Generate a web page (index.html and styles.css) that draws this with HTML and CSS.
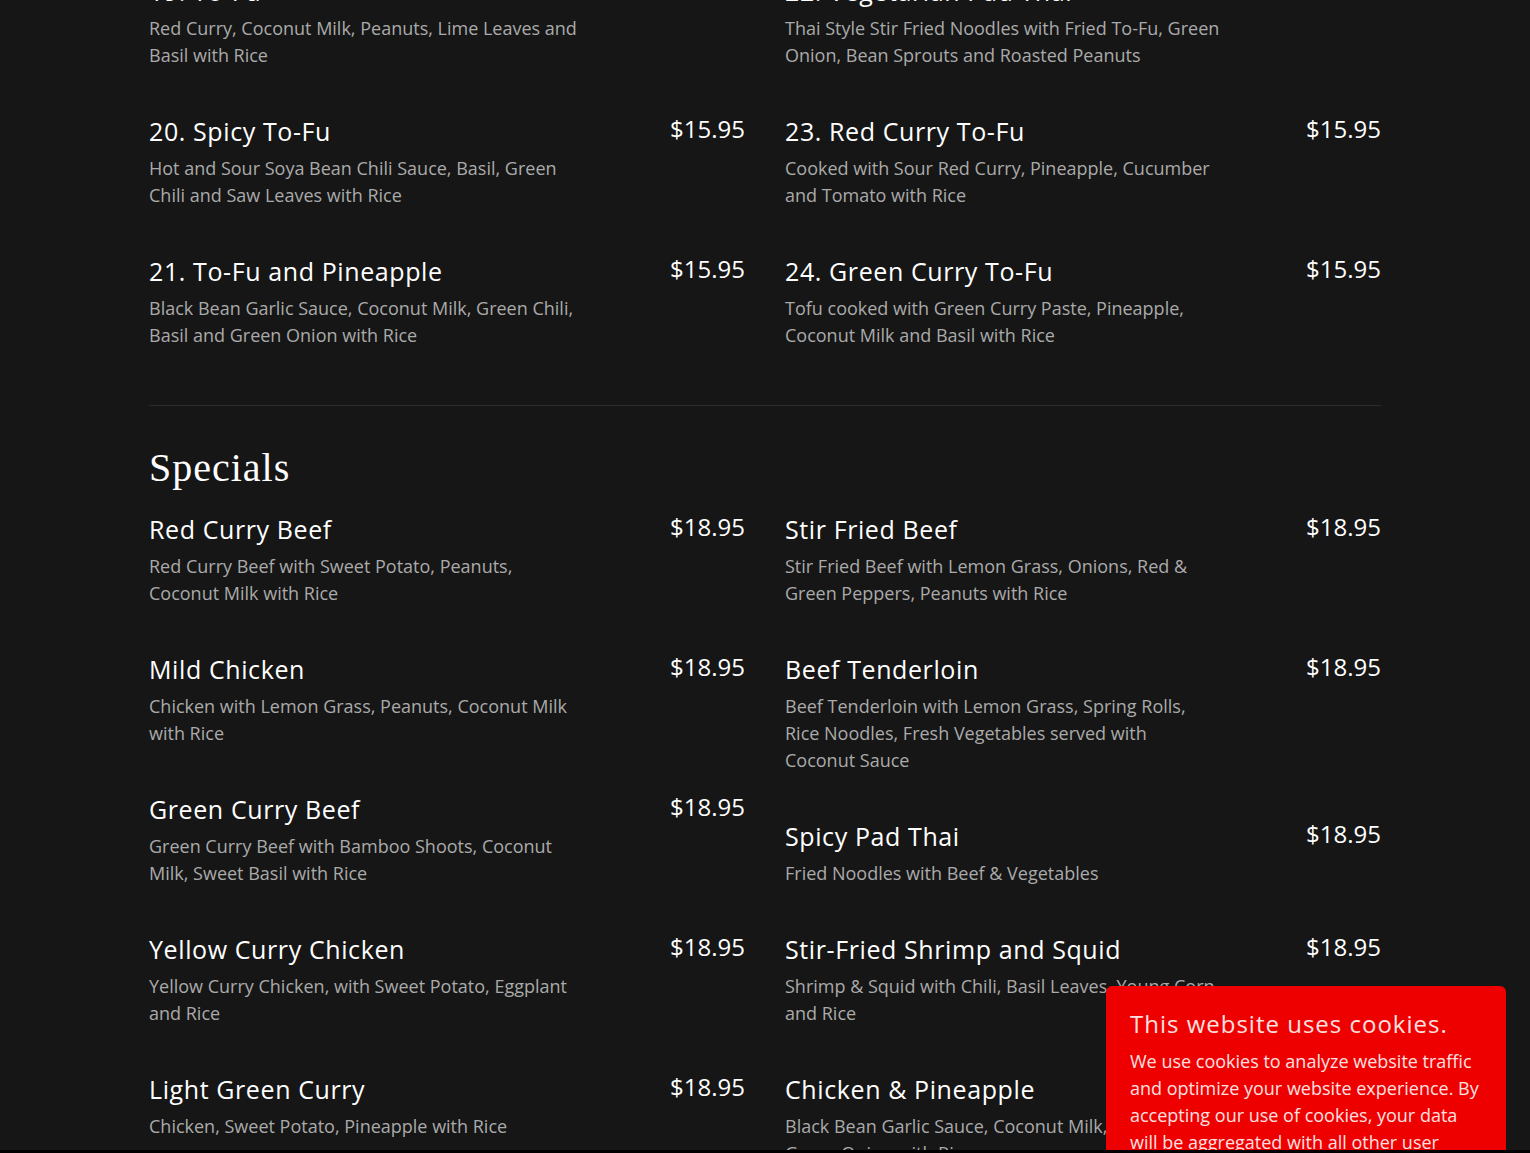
FILE: index.html
```html
<!DOCTYPE html>
<html lang="en">
<head>
<meta charset="utf-8">
<title>Menu</title>
<link rel="stylesheet" href="styles.css">
</head>
<body>
<main class="menu">
  <section class="section">
    <div class="columns">
      <div class="col">
        <div class="item"><div class="row"><h3 class="name">19. To-Fu</h3><span class="price">$15.95</span></div><p class="desc">Red Curry, Coconut Milk, Peanuts, Lime Leaves and Basil with Rice</p></div>
        <div class="item"><div class="row"><h3 class="name">20. Spicy To-Fu</h3><span class="price">$15.95</span></div><p class="desc">Hot and Sour Soya Bean Chili Sauce, Basil, Green Chili and Saw Leaves with Rice</p></div>
        <div class="item"><div class="row"><h3 class="name">21. To-Fu and Pineapple</h3><span class="price">$15.95</span></div><p class="desc">Black Bean Garlic Sauce, Coconut Milk, Green Chili, Basil and Green Onion with Rice</p></div>
      </div>
      <div class="col">
        <div class="item"><div class="row"><h3 class="name">22. Vegetarian Pad Thai</h3><span class="price">$15.95</span></div><p class="desc">Thai Style Stir Fried Noodles with Fried To-Fu, Green Onion, Bean Sprouts and Roasted Peanuts</p></div>
        <div class="item"><div class="row"><h3 class="name">23. Red Curry To-Fu</h3><span class="price">$15.95</span></div><p class="desc">Cooked with Sour Red Curry, Pineapple, Cucumber and Tomato with Rice</p></div>
        <div class="item"><div class="row"><h3 class="name">24. Green Curry To-Fu</h3><span class="price">$15.95</span></div><p class="desc">Tofu cooked with Green Curry Paste, Pineapple, Coconut Milk and Basil with Rice</p></div>
      </div>
    </div>
  </section>
  <hr class="divider">
  <section class="section">
    <h2 class="heading">Specials</h2>
    <div class="columns">
      <div class="col">
        <div class="item"><div class="row"><h3 class="name">Red Curry Beef</h3><span class="price">$18.95</span></div><p class="desc">Red Curry Beef with Sweet Potato, Peanuts, Coconut Milk with Rice</p></div>
        <div class="item"><div class="row"><h3 class="name">Mild Chicken</h3><span class="price">$18.95</span></div><p class="desc">Chicken with Lemon Grass, Peanuts, Coconut Milk with Rice</p></div>
        <div class="item"><div class="row"><h3 class="name">Green Curry Beef</h3><span class="price">$18.95</span></div><p class="desc">Green Curry Beef with Bamboo Shoots, Coconut Milk, Sweet Basil with Rice</p></div>
        <div class="item"><div class="row"><h3 class="name">Yellow Curry Chicken</h3><span class="price">$18.95</span></div><p class="desc">Yellow Curry Chicken, with Sweet Potato, Eggplant and Rice</p></div>
        <div class="item"><div class="row"><h3 class="name">Light Green Curry</h3><span class="price">$18.95</span></div><p class="desc">Chicken, Sweet Potato, Pineapple with Rice</p></div>
      </div>
      <div class="col">
        <div class="item"><div class="row"><h3 class="name">Stir Fried Beef</h3><span class="price">$18.95</span></div><p class="desc">Stir Fried Beef with Lemon Grass, Onions, Red &amp; Green Peppers, Peanuts with Rice</p></div>
        <div class="item"><div class="row"><h3 class="name">Beef Tenderloin</h3><span class="price">$18.95</span></div><p class="desc">Beef Tenderloin with Lemon Grass, Spring Rolls, Rice Noodles, Fresh Vegetables served with Coconut Sauce</p></div>
        <div class="item"><div class="row"><h3 class="name">Spicy Pad Thai</h3><span class="price">$18.95</span></div><p class="desc">Fried Noodles with Beef &amp; Vegetables</p></div>
        <div class="item"><div class="row"><h3 class="name">Stir-Fried Shrimp and Squid</h3><span class="price">$18.95</span></div><p class="desc">Shrimp &amp; Squid with Chili, Basil Leaves, Young Corn and Rice</p></div>
        <div class="item"><div class="row"><h3 class="name">Chicken &amp; Pineapple</h3><span class="price">$18.95</span></div><p class="desc">Black Bean Garlic Sauce, Coconut Milk, Green Chili, Green Onion with Rice</p></div>
      </div>
    </div>
  </section>
</main>
<aside class="cookie">
  <h4 class="cookie-title">This website uses cookies.</h4>
  <p class="cookie-text">We use cookies to analyze website traffic and optimize your website experience. By accepting our use of cookies, your data will be aggregated with all other user data.</p>
</aside>
<div class="bottom-bar"></div>
</body>
</html>
```
FILE: styles.css
```css
html, body {
  margin: 0;
  padding: 0;
  background: #161616;
  overflow: hidden;
}
body {
  font-family: "Open Sans", "Liberation Sans", sans-serif;
  color: #fff;
  height: 1153px;
}
.menu {
  width: 1232px;
  margin: -27px auto 0;
}
.columns {
  display: grid;
  grid-template-columns: 1fr 1fr;
  column-gap: 40px;
  align-items: start;
}
.item {
  margin-bottom: 44px;
}
.row {
  display: flex;
  justify-content: space-between;
  align-items: flex-start;
  margin-bottom: 6px;
}
.name {
  margin: 0;
  font-size: 25px;
  line-height: 36px;
  font-weight: 400;
  letter-spacing: 0.6px;
  color: #fff;
}
.price {
  font-size: 24px;
  line-height: 32px;
  color: #fff;
}
.desc {
  margin: 0;
  max-width: 436px;
  font-size: 18px;
  line-height: 27px;
  color: #aaaaaa;
}
.divider {
  border: 0;
  height: 1px;
  background: #2a2a2a;
  margin: 12px 0 37px;
}
.heading {
  margin: 0 0 18px;
  font-family: "Liberation Serif", "DejaVu Serif", serif;
  font-weight: 400;
  font-size: 40px;
  line-height: 50px;
  letter-spacing: 1px;
  color: #fff;
}
.cookie {
  position: fixed;
  left: 1106px;
  top: 986px;
  width: 352px;
  padding: 20px 24px 24px;
  background: #ee0000;
  border-radius: 6px;
  color: #ffe0e0;
}
.cookie-title {
  margin: 0 0 6px;
  font-size: 24px;
  line-height: 36px;
  font-weight: 400;
  letter-spacing: 1px;
}
.cookie-text {
  margin: 0;
  font-size: 18px;
  line-height: 27px;
}
.bottom-bar {
  position: fixed;
  left: 0;
  right: 0;
  bottom: 0;
  height: 3px;
  background: #000;
}
```
